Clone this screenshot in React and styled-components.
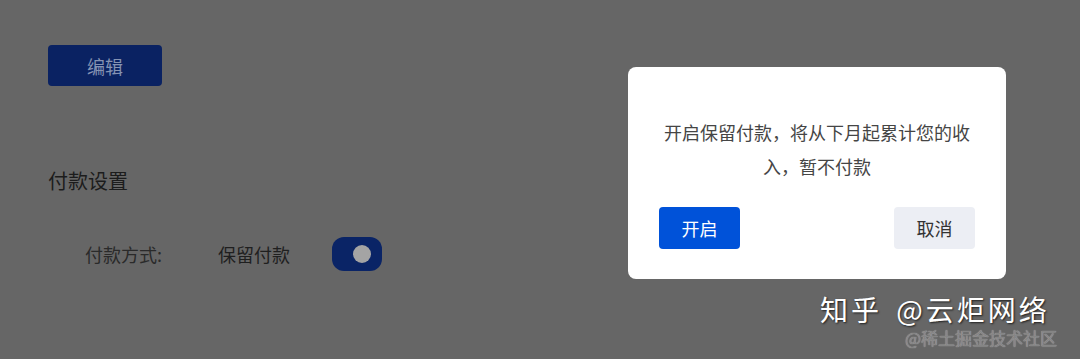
import styled, { createGlobalStyle } from "styled-components";

const GlobalStyle = createGlobalStyle`
  html, body {
    margin: 0;
    padding: 0;
    background: #666666;
  }
  body {
    font-family: "Noto Sans CJK SC", "Noto Sans", sans-serif;
  }
`;

function App() {
  return (
    <>
      <GlobalStyle />
      <Page>
        <EditButton>编辑</EditButton>
        <SectionTitle>付款设置</SectionTitle>
        <Row>
          <Label>付款方式:</Label>
          <Value>保留付款</Value>
          <Toggle>
            <Knob />
          </Toggle>
        </Row>

        <Dialog>
          <Message>开启保留付款，将从下月起累计您的收入，暂不付款</Message>
          <Actions>
            <DialogButton primary>开启</DialogButton>
            <DialogButton>取消</DialogButton>
          </Actions>
        </Dialog>

        <Watermark>
          <Brand>知乎 @云炬网络</Brand>
          <SubBrand>@稀土掘金技术社区</SubBrand>
        </Watermark>
      </Page>
    </>
  );
}

const Page = styled.div`
  position: relative;
  width: 1080px;
  height: 359px;
  box-sizing: border-box;
  padding: 45px 48px 0;
  overflow: hidden;
  display: flex;
  flex-direction: column;
  align-items: flex-start;
`;

const EditButton = styled.button`
  width: 114px;
  height: 41px;
  border: none;
  border-radius: 4px;
  background: #0a2262;
  color: #8593b3;
  font-family: inherit;
  font-size: 18px;
  padding: 0;
`;

const SectionTitle = styled.h3`
  margin: 81px 0 0;
  font-size: 20px;
  font-weight: 400;
  line-height: 28px;
  color: #1c1c1c;
`;

const Row = styled.div`
  margin-top: 42px;
  padding-left: 37px;
  display: flex;
  align-items: center;
`;

const Label = styled.span`
  font-size: 18px;
  color: #2a2a2a;
  width: 133px;
`;

const Value = styled.span`
  font-size: 18px;
  color: #1f1f1f;
  width: 114px;
`;

const Toggle = styled.div`
  width: 50px;
  height: 34px;
  border-radius: 12px;
  background: #0a2466;
  display: flex;
  align-items: center;
  justify-content: flex-end;
  padding-right: 11px;
  box-sizing: border-box;
`;

const Knob = styled.span`
  width: 18px;
  height: 18px;
  border-radius: 50%;
  background: #a4a4a4;
`;

const Dialog = styled.div`
  position: absolute;
  left: 628px;
  top: 67px;
  width: 378px;
  height: 212px;
  box-sizing: border-box;
  padding: 48px 31px 0;
  background: #ffffff;
  border-radius: 8px;
  display: flex;
  flex-direction: column;
`;

const Message = styled.p`
  margin: 0;
  font-size: 18px;
  line-height: 34px;
  color: #454545;
  text-align: center;
`;

const Actions = styled.div`
  margin-top: 24px;
  display: flex;
  justify-content: space-between;
`;

const DialogButton = styled.button`
  width: 81px;
  height: 42px;
  border: none;
  border-radius: 4px;
  padding: 0;
  font-family: inherit;
  font-size: 18px;
  background: ${(p) => (p.primary ? "#0052d9" : "#eceef4")};
  color: ${(p) => (p.primary ? "#ffffff" : "#333333")};
`;

const Watermark = styled.div`
  position: absolute;
  left: 820px;
  top: 292px;
  display: flex;
  flex-direction: column;
  align-items: flex-start;
`;

const Brand = styled.span`
  font-size: 28px;
  line-height: 34px;
  color: #ffffff;
  letter-spacing: 3px;
  word-spacing: 5px;
  white-space: nowrap;
  text-shadow: 1px 1px 2px rgba(0, 0, 0, 0.7);
`;

const SubBrand = styled.span`
  margin-left: 85px;
  margin-top: 2px;
  font-size: 17px;
  line-height: 20px;
  color: #858585;
  white-space: nowrap;
  text-shadow: 0 0 1px rgba(255, 255, 255, 0.6);
`;

export default App;
